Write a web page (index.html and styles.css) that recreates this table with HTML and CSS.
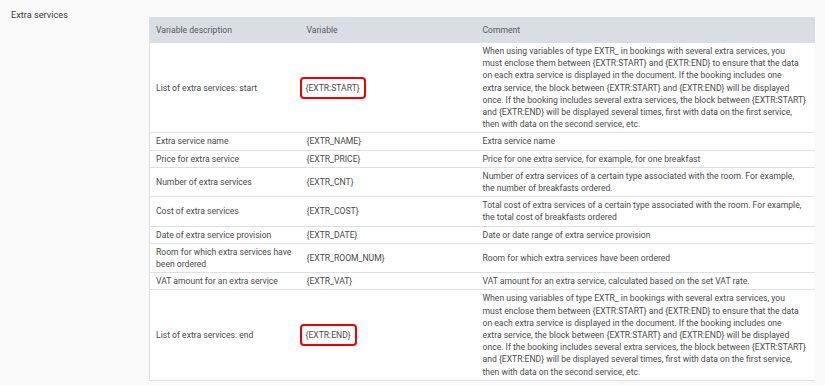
FILE: index.html
```html
<!DOCTYPE html>
<html lang="en">
  <head>
    <meta charset="UTF-8" />
    <title>Extra services</title>
    <link rel="stylesheet" href="styles.css">
  </head>
  <body>
    <div class="section">
      <div class="section-title">Extra services</div>

      <!-- Variables table -->
      <table class="var-table">
        <colgroup>
          <col class="col-desc">
          <col class="col-var">
          <col class="col-comment">
        </colgroup>
        <thead>
          <tr>
            <th>Variable description</th>
            <th>Variable</th>
            <th>Comment</th>
          </tr>
        </thead>
        <tbody>
          <tr>
            <td>List of extra services: start</td>
            <td><span class="mark">{EXTR:START}</span></td>
            <td class="long">When using variables of type EXTR_ in bookings with several extra services, you<br>
              must enclose them between {EXTR:START} and {EXTR:END} to ensure that the data<br>
              on each extra service is displayed in the document. If the booking includes one<br>
              extra service, the block between {EXTR:START} and {EXTR:END} will be displayed<br>
              once. If the booking includes several extra services, the block between {EXTR:START}<br>
              and {EXTR:END} will be displayed several times, first with data on the first service,<br>
              then with data on the second service, etc.</td>
          </tr>
          <tr>
            <td>Extra service name</td>
            <td>{EXTR_NAME}</td>
            <td>Extra service name</td>
          </tr>
          <tr>
            <td>Price for extra service</td>
            <td>{EXTR_PRICE}</td>
            <td>Price for one extra service, for example, for one breakfast</td>
          </tr>
          <tr>
            <td>Number of extra services</td>
            <td>{EXTR_CNT}</td>
            <td>Number of extra services of a certain type associated with the room. For example, the number of breakfasts ordered.</td>
          </tr>
          <tr>
            <td>Cost of extra services</td>
            <td>{EXTR_COST}</td>
            <td>Total cost of extra services of a certain type associated with the room. For example, the total cost of breakfasts ordered</td>
          </tr>
          <tr>
            <td>Date of extra service provision</td>
            <td>{EXTR_DATE}</td>
            <td>Date or date range of extra service provision</td>
          </tr>
          <tr>
            <td>Room for which extra services have been ordered</td>
            <td>{EXTR_ROOM_NUM}</td>
            <td>Room for which extra services have been ordered</td>
          </tr>
          <tr>
            <td>VAT amount for an extra service</td>
            <td>{EXTR_VAT}</td>
            <td>VAT amount for an extra service, calculated based on the set VAT rate.</td>
          </tr>
          <tr>
            <td>List of extra services: end</td>
            <td><span class="mark">{EXTR:END}</span></td>
            <td class="long">When using variables of type EXTR_ in bookings with several extra services, you<br>
              must enclose them between {EXTR:START} and {EXTR:END} to ensure that the data<br>
              on each extra service is displayed in the document. If the booking includes one<br>
              extra service, the block between {EXTR:START} and {EXTR:END} will be displayed<br>
              once. If the booking includes several extra services, the block between {EXTR:START}<br>
              and {EXTR:END} will be displayed several times, first with data on the first service,<br>
              then with data on the second service, etc.</td>
          </tr>
        </tbody>
      </table>
    </div>
  </body>
</html>
```

FILE: styles.css
```css
/* basic styling */
* {
  margin: 0;
  padding: 0;
  box-sizing: border-box;
}
body {
  font-family: Roboto, "Noto Sans", sans-serif;
  font-size: 8.6px;
  line-height: 12.2px;
  color: #4a4a4a;
  background-color: #f9f9f9;
}

/* Section with label on the left and table on the right */
.section {
  display: flex;
  padding: 9px 0 0 11px;
}
.section-title {
  width: 138px;
  font-size: 9.2px;
  line-height: 12px;
  color: #3f3f3f;
}

/* Variables table */
.var-table {
  margin-top: 8px;
  width: 665px;
  border-collapse: collapse;
  table-layout: fixed;
  background-color: #ffffff;
  border-left: 1px solid #dcdfe3;
}
.col-desc {
  width: 151px;
}
.col-var {
  width: 176px;
}
.col-comment {
  width: 338px;
}
.var-table th {
  text-align: left;
  font-weight: normal;
  line-height: 12px;
  color: #555a60;
  background-color: #d9dee5;
  padding: 7px 6px;
}
.var-table td {
  padding: 2px 6px;
  vertical-align: middle;
  border-bottom: 1px solid #dcdfe3;
}
.var-table td:last-child {
  padding-right: 12px;
}
.var-table td.long {
  padding-right: 0;
  white-space: nowrap;
}

/* Red highlight round a variable */
.mark {
  display: inline-block;
  margin-left: -7px;
  padding: 3px 4px;
  line-height: 12px;
  border: 2px solid #ee0000;
  border-radius: 4px;
}
```
